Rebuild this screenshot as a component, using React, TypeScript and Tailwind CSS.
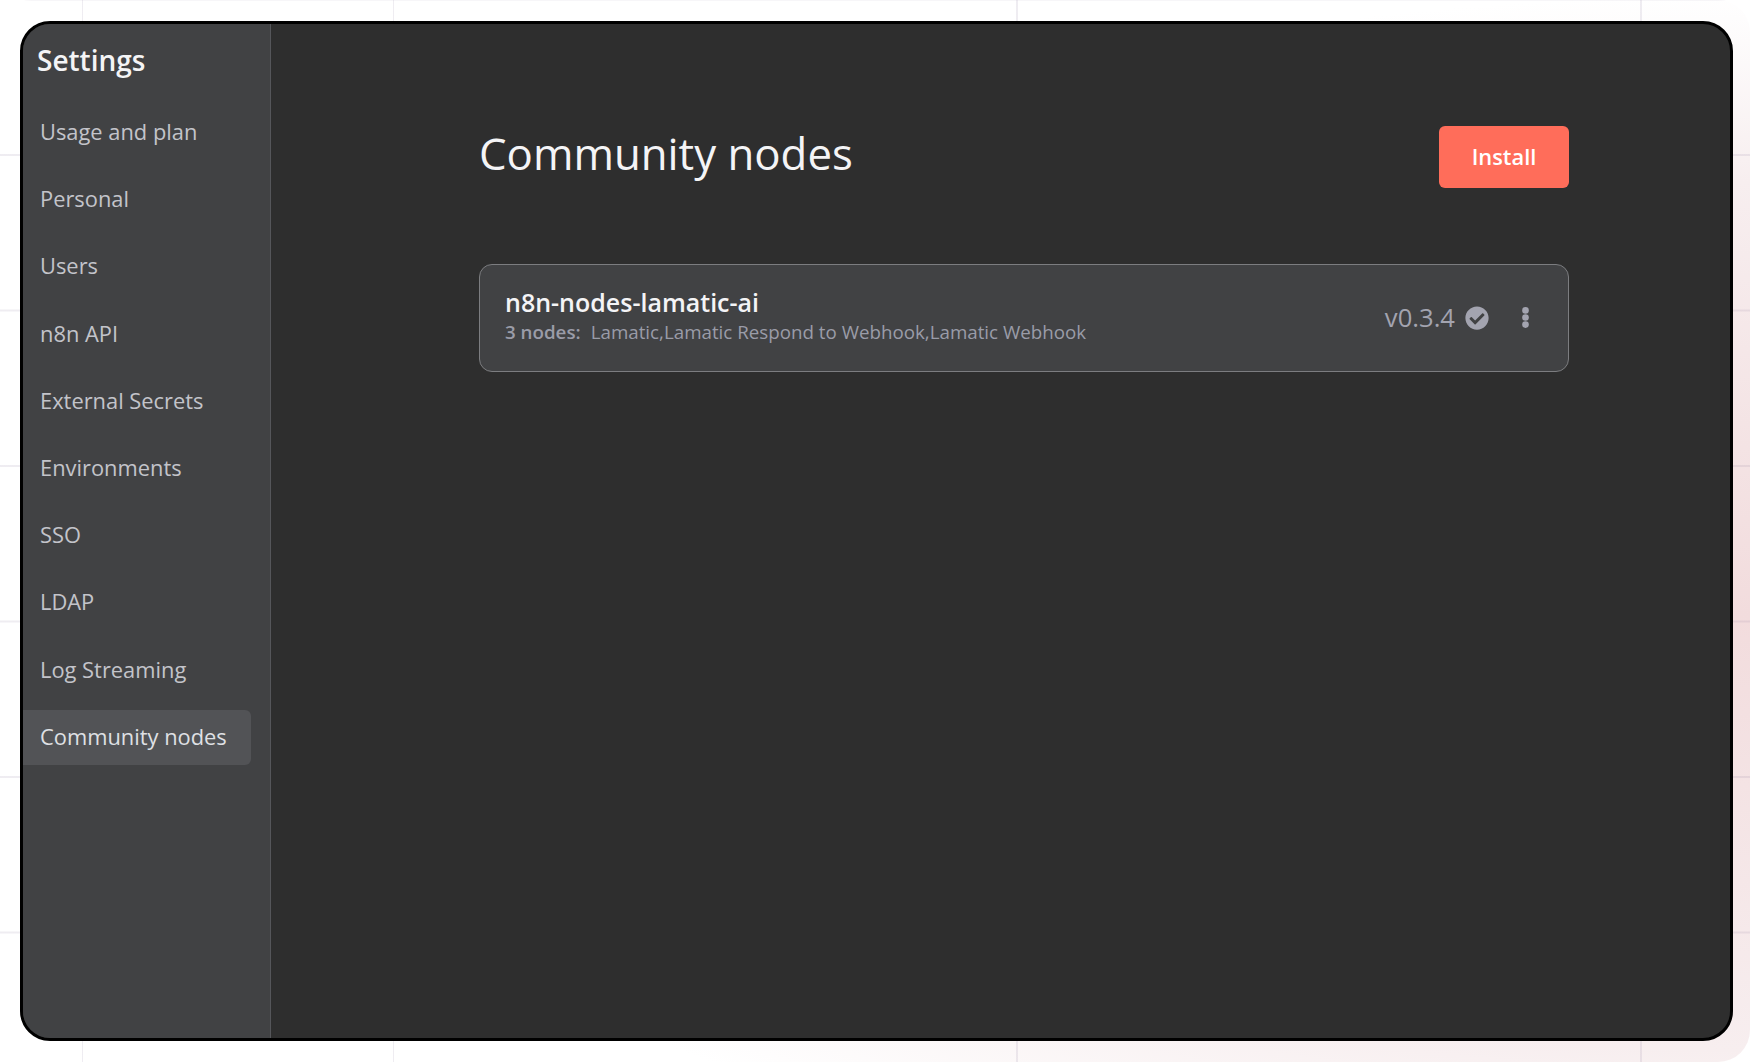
import { FaCheckCircle } from "react-icons/fa";

const navItems = [
  "Usage and plan",
  "Personal",
  "Users",
  "n8n API",
  "External Secrets",
  "Environments",
  "SSO",
  "LDAP",
  "Log Streaming",
  "Community nodes",
];

function DotsIcon() {
  return (
    <svg width="7" height="21" viewBox="0 0 7 21" fill="#a3a4b0">
      <circle cx="3.5" cy="3.4" r="3.3" />
      <circle cx="3.5" cy="10.5" r="3.3" />
      <circle cx="3.5" cy="17.6" r="3.3" />
    </svg>
  );
}

export default function App() {
  return (
    <div className="h-[1062px] w-[1752px] overflow-hidden bg-white font-['Open_Sans',sans-serif]">
      <div className="h-full w-[1750px] overflow-hidden rounded-[32px] bg-[radial-gradient(ellipse_1500px_620px_at_100%_58%,#f2dcdd_0%,#f7eeef_70%,#ffffff_100%)]">
        <div className="h-full w-full pl-[20px] pt-[21px] bg-[linear-gradient(to_right,transparent_82px,#7a68901f_82px,#7a68901f_83.5px,transparent_83.5px,transparent_393px,#7a68901f_393px,#7a68901f_394.5px,transparent_394.5px,transparent_1016px,#7a68901f_1016px,#7a68901f_1017.5px,transparent_1017.5px,transparent_1640px,#7a68901f_1640px,#7a68901f_1641.5px,transparent_1641.5px),linear-gradient(to_bottom,#7a68901f_1.5px,transparent_1.5px)] bg-[size:100%_100%,100%_155.5px] bg-[position:0_0,0_-1.5px]">
          <div className="flex h-[1020px] w-[1713px] overflow-hidden rounded-[30px] border-[3px] border-black bg-[#2e2e2e]">
            <aside className="w-[248px] shrink-0 border-r border-[#55565a] bg-[#414244]">
              <h2 className="pl-[14px] pt-[17px] text-[28px] leading-[38px] font-semibold text-[#f4f4f6]">Settings</h2>
              <nav className="mt-[26px] flex flex-col gap-[12.2px]">
                {navItems.map(item => (
                  <div
                    key={item}
                    className={`flex h-[55px] w-[228px] items-center rounded-r-[6px] pl-[17px] text-[21.875px] ${
                      item === "Community nodes" ? "bg-[#525356] text-[#dfe0e4]" : "text-[#c3c4ca]"
                    }`}
                  >
                    {item}
                  </div>
                ))}
              </nav>
            </aside>

            <main className="flex-1 pl-[208px] pt-[102px]">
              <div className="w-[1090px]">
                <div className="flex items-start justify-between">
                  <h1 className="mt-[-3px] text-[43.75px] leading-[61px] text-[#f4f4f6]">Community nodes</h1>
                  <button className="h-[62px] w-[130px] rounded-[6px] bg-[#ff6d5a] text-[21.875px] font-semibold text-white">Install</button>
                </div>

                <div className="mt-[76px] flex h-[108px] items-center justify-between rounded-[13px] border-[1.5px] border-[#7c7d80] bg-[#414244] pl-[25px] pr-[39px]">
                  <div className="pb-[6px]">
                    <div className="text-[25px] leading-[34px] font-semibold text-[#f4f4f6]">n8n-nodes-lamatic-ai</div>
                    <div className="flex text-[18.75px] leading-[26px] text-[#9a9ca8]">
                      <span className="mr-[10px] font-semibold">3 nodes:</span>
                      <span>Lamatic,Lamatic Respond to Webhook,Lamatic Webhook</span>
                    </div>
                  </div>
                  <div className="flex items-center">
                    <span className="text-[25.6px] text-[#a3a4b0]">v0.3.4</span>
                    <FaCheckCircle className="ml-[10px] mr-[33px] text-[24px] text-[#a3a4b0]" />
                    <DotsIcon />
                  </div>
                </div>
              </div>
            </main>
          </div>
        </div>
      </div>
    </div>
  );
}
